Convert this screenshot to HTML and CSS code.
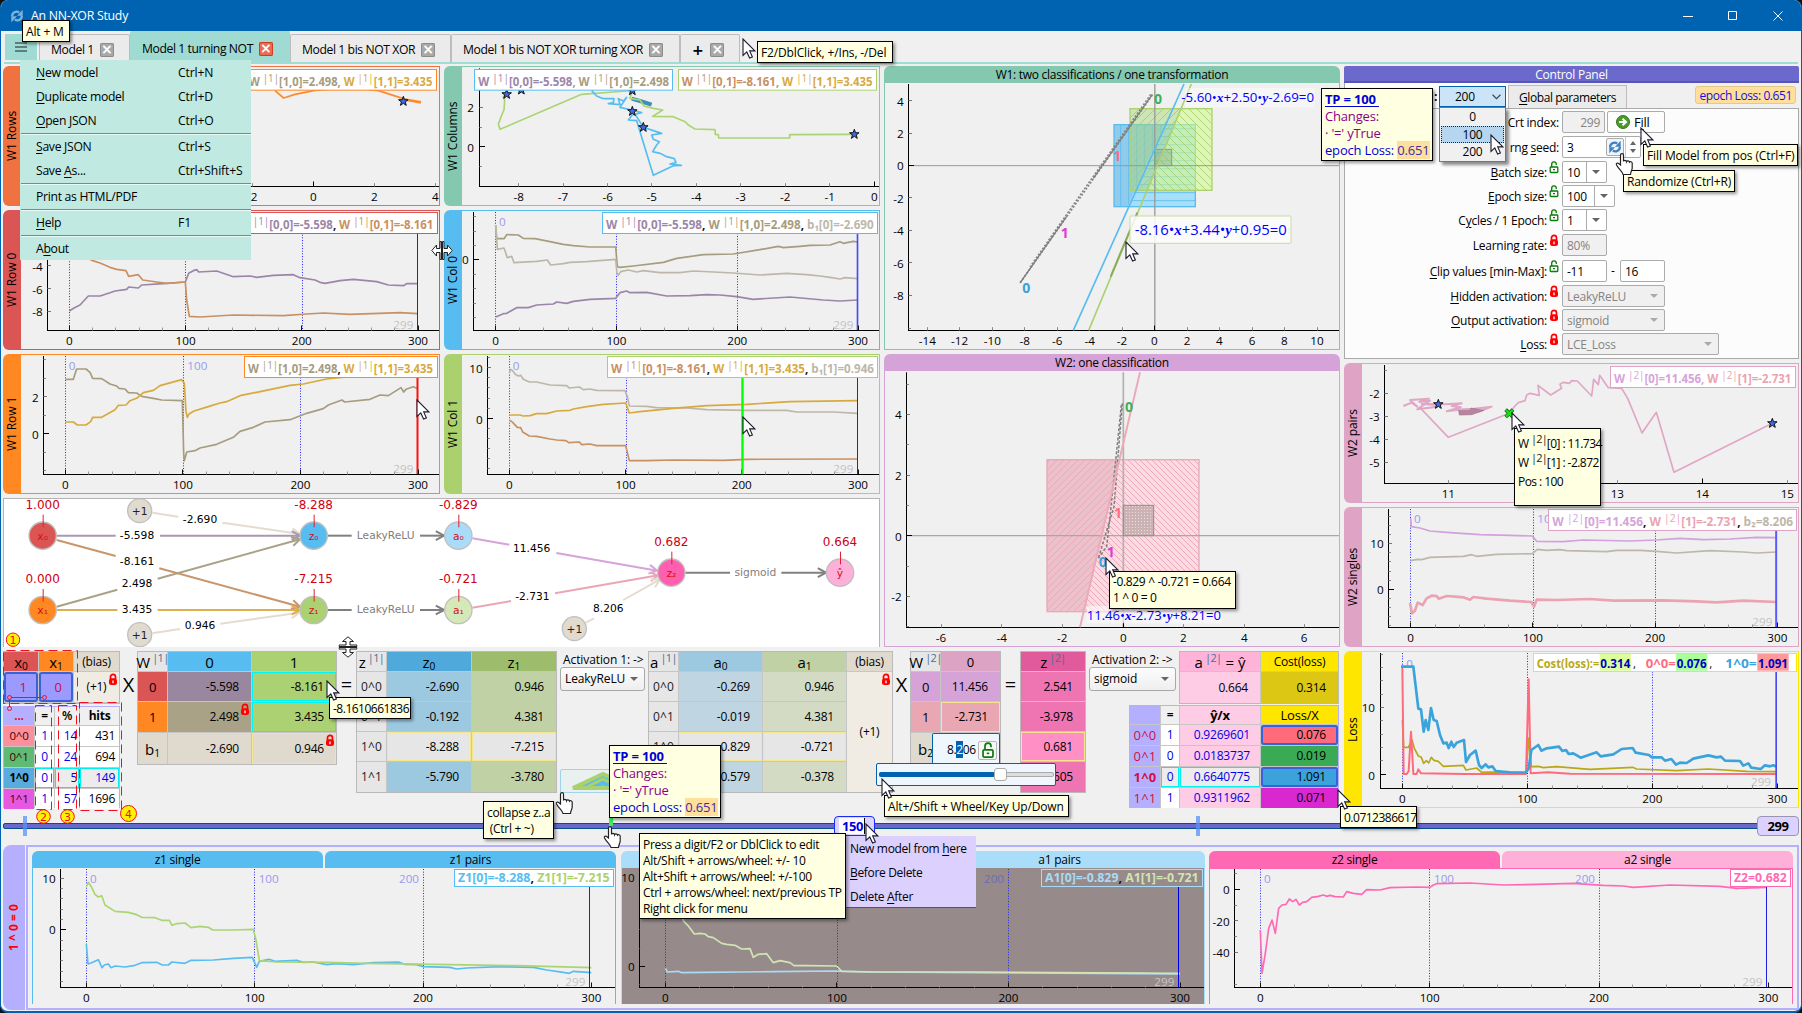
FILE: index.html
```html
<!DOCTYPE html>
<html lang="en">
<head>
<meta charset="utf-8">
<title>An NN-XOR Study</title>
<link rel="stylesheet" href="styles.css">
</head>
<body>
<svg class="defs" width="0" height="0">
  <symbol id="arrow" viewBox="0 0 14 22"><path d="M1 1v16.5l3.8-3.6 2.8 6.2 2.8-1.2-2.7-6h5.2z" fill="#fff" stroke="#1a1a2e" stroke-width="1.1"/></symbol>
  <symbol id="hand" viewBox="0 0 20 24"><path d="M5.5 13V3.2C5.5 1 8.5 1 8.5 3.2V9.5c.3-1.600 2.700-1.500 3 .2.500-1.300 2.600-1.100 3 .500.800-1 2.500-.500 2.700 1V16c0 2-1.500 3-1.700 6.500H8C7.500 19.500 4 17.500 1.500 13c-.7-1.500 1-2.500 2.200-1.500z" fill="#fff" stroke="#222" stroke-width="1.200"/></symbol>
  <symbol id="split" viewBox="0 0 22 19"><path d="M9 .5v7H5.500V4L.8 9.500l4.700 5.500v-3.500H9v7h1.500V.5zM13 .5v7h3.500V4l4.700 5.500-4.700 5.500v-3.500H13v7h-1.500V.5z" fill="#fff" stroke="#222"/></symbol>
  <symbol id="locked" viewBox="0 0 10 13"><path d="M2.500 6V3.800a2.500 2.500 0 0 1 5 0V6" fill="none" stroke="red" stroke-width="1.700"/><rect x="1" y="5.300" width="8" height="6.700" rx="2.500" fill="red"/><path d="M5 7.500v2.700" stroke="#fff" stroke-width="1.300"/></symbol>
  <symbol id="open" viewBox="0 0 10 13"><path d="M2.700 6V3.200a2.300 2.300 0 0 1 4.600 0V4" fill="none" stroke="#0a7a0a" stroke-width="1.300"/><rect x="1.200" y="6" width="7.600" height="5.500" rx=".8" fill="#fff" stroke="#0a7a0a" stroke-width="1.300"/><path d="M4 8.700h2" stroke="#0a7a0a" stroke-width="1.300"/></symbol>
  <symbol id="refresh" viewBox="0 0 16 16"><path d="M2.500 8.500C2 4.500 7 1.500 10.500 4" fill="none" stroke="currentColor" stroke-width="2.600"/><path d="M14.500.8v7H8z" fill="currentColor"/><path d="M13.500 7.500c.5 4-4.500 7-8 4.500" fill="none" stroke="currentColor" stroke-width="2.600"/><path d="M1.500 15.200v-7H8z" fill="currentColor"/></symbol>
</svg>
<div class="window">
  <header class="titlebar">
    <svg class="app-icon"><use href="#refresh"/></svg>
    <span class="app-title">An NN-XOR Study</span>
    <svg class="win-buttons" viewBox="0 0 110 16"><path d="M5 8.500h10M50.500 3.500h8v8h-8zM95.500 3.500l9 9M104.500 3.500l-9 9" fill="none" stroke="#fff"/></svg>
  </header>
  <nav class="tabs">
    <span class="burger"><i></i><i></i><i></i></span>
    <span class="tab t1">Model 1<b class="x">×</b></span>
    <span class="tab t2 active">Model 1 turning NOT<b class="x hot">×</b></span>
    <span class="tab t3">Model 1 bis NOT XOR<b class="x">×</b></span>
    <span class="tab t4">Model 1 bis NOT XOR turning XOR<b class="x">×</b></span>
    <span class="tab t5"><b class="plus">+</b><b class="x">×</b></span>
  </nav>
  <main class="main">
    <section class="left">
      <div class="panel orange-red"><h2>W1 Rows</h2><svg id="w1-rows"></svg></div>
      <div class="panel teal"><h2>W1 Columns</h2><svg id="w1-cols"></svg></div>
      <div class="panel red"><h2>W1 Row 0</h2><svg id="w1-row0"></svg></div>
      <div class="panel blue"><h2>W1 Col 0</h2><svg id="w1-col0"></svg></div>
      <div class="panel orange"><h2>W1 Row 1</h2><svg id="w1-row1"></svg></div>
      <div class="panel green"><h2>W1 Col 1</h2><svg id="w1-col1"></svg></div>
      <div class="network"><svg id="network"></svg></div>
    </section>
    <section class="middle">
      <div class="panel top teal tall1"><h2>W1: two classifications / one transformation</h2><svg id="w1-plane"></svg></div>
      <div class="panel top orchid tall2"><h2>W2: one classification</h2><svg id="w2-plane"></svg></div>
    </section>
    <section class="right">
      <div class="control">
        <h2>Control Panel</h2>
        <div class="ctabs"><span class="tp-tab">:</span><span class="gp-tab"><u>G</u>lobal parameters</span><span class="badge">epoch Loss: 0.651</span></div>
        <div class="form">
          <label class="wide">Crt index:</label><span class="row"><span class="in off r w43">299</span><span class="btn"><svg class="go" viewBox="0 0 14 14"><circle cx="7" cy="7" r="6.500" fill="#4a9a2c" stroke="#2f7a1c"/><path d="M3 7h6M6.500 3.800L10 7l-3.500 3.200" fill="none" stroke="#fff" stroke-width="2"/></svg><span>F<u>i</u>ll</span></span></span>
          <label class="wide">rng <u>s</u>eed:</label><span class="row"><span class="in seed">3<svg class="dice"><use href="#refresh"/></svg><span class="spin"><i class="up"></i><i class="dn"></i></span></span></span>
          <label><u>B</u>atch size:</label><svg class="lock"><use href="#open"/></svg><span class="in combo w45">10<i class="dd"></i></span>
          <label><u>E</u>poch size:</label><svg class="lock"><use href="#open"/></svg><span class="in combo w53">100<i class="dd"></i></span>
          <label>C<u>y</u>cles / 1 Epoch:</label><svg class="lock"><use href="#open"/></svg><span class="in combo w45">1<i class="dd"></i></span>
          <label>Learning <u>r</u>ate:</label><svg class="lock"><use href="#locked"/></svg><span class="in off w45">80%</span>
          <label><u>C</u>lip values [min-Max]:</label><svg class="lock"><use href="#open"/></svg><span class="row clip"><span class="in w45">-11</span><span>-</span><span class="in w45">16</span></span>
          <label><u>H</u>idden activation:</label><svg class="lock"><use href="#locked"/></svg><span class="in off sel w103">LeakyReLU<i class="dd"></i></span>
          <label><u>O</u>utput activation:</label><svg class="lock"><use href="#locked"/></svg><span class="in off sel w103">sigmoid<i class="dd"></i></span>
          <label><u>L</u>oss:</label><svg class="lock"><use href="#locked"/></svg><span class="in off sel w157">LCE_Loss<i class="dd"></i></span>
        </div>
      </div>
      <div class="panel pink"><h2>W2 pairs</h2><svg id="w2-pairs"></svg></div>
      <div class="panel pink"><h2>W2 singles</h2><svg id="w2-singles"></svg></div>
    </section>
  </main>
  <section class="calc">
    <div class="stack inputs">
      <div class="tbl tx">
        <b class="h c-red">x<sub>0</sub></b><b class="h c-orange">x<sub>1</sub></b><b class="h c-bias sm">(bias)</b>
        <span class="sel">1</span><span class="sel">0</span><span class="c-bias2">(+1)<svg class="lock"><use href="#locked"/></svg></span>
      </div>
      <div class="tbl hits">
        <span class="lav redt">...</span><span class="hd">=</span><span class="hd">%</span><span class="hd bold">hits</span>
        <span class="k c00">0^0</span><span class="n">1</span><span class="n r">14</span><span class="v">431</span>
        <span class="k c01">0^1</span><span class="n">0</span><span class="n r">24</span><span class="v">694</span>
        <span class="k c10">1^0</span><span class="n cy">0</span><span class="n r cy g">5</span><span class="v cy g bl">149</span>
        <span class="k c11">1^1</span><span class="n">1</span><span class="n r">57</span><span class="v">1696</span>
      </div>
    </div>
    <div class="op op1">X</div>
    <div class="tbl w1t">
      <b class="h c-gray">W<sup>|1|</sup></b><b class="h c-blue">0</b><b class="h c-green">1</b>
      <span class="c-red mid">0</span><span class="c-mauve num">-5.598</span><span class="c-green num cyb">-8.161</span>
      <span class="c-orange mid">1</span><span class="c-khaki num">2.498<svg class="lock"><use href="#locked"/></svg></span><span class="c-green num cyb">3.435</span>
      <span class="c-bias mid bvec">b<sub>1</sub></span><span class="c-bias num">-2.690</span><span class="c-bias num yb">0.946<svg class="lock"><use href="#locked"/></svg></span>
    </div>
    <div class="op op2">=</div>
    <div class="tbl z1t">
      <b class="h c-gray">z<sup>|1|</sup></b><b class="h c-blue2">z<sub>0</sub></b><b class="h c-green2">z<sub>1</sub></b>
      <span class="c-gray key">0^0</span><span class="c-b3 num">-2.690</span><span class="c-g3 num">0.946</span>
      <span class="c-gray key">0^1</span><span class="c-b3 num">-0.192</span><span class="c-g3 num">4.381</span>
      <span class="c-gray key">1^0</span><span class="c-gray num yb">-8.288</span><span class="c-gray num yb">-7.215</span>
      <span class="c-gray key">1^1</span><span class="c-b3 num">-5.790</span><span class="c-g3 num">-3.780</span>
    </div>
    <div class="act act1"><span class="cap">Activation 1: -&gt;</span><span class="drop">LeakyReLU<i class="dd"></i></span>
      <span class="fold"><svg viewBox="0 0 82 22"><path d="M12 18L42 4l30 14z" fill="#57bdf0" stroke="#abd16f" stroke-width="4"/><path d="M24 18l18-9 18 9" fill="none" stroke="#abd16f" stroke-width="3"/><path d="M37 18l5-3 5 3z" fill="#abd16f"/></svg></span></div>
    <div class="tbl a1t">
      <b class="h c-gray">a<sup>|1|</sup></b><b class="h c-b3">a<sub>0</sub></b><b class="h c-g3">a<sub>1</sub></b><b class="h c-bias sm">(bias)</b>
      <span class="c-gray key">0^0</span><span class="c-b4 num">-0.269</span><span class="c-g4 num">0.946</span><span class="c-bias2 plus1">(+1)<svg class="lock"><use href="#locked"/></svg></span>
      <span class="c-gray key">0^1</span><span class="c-b4 num">-0.019</span><span class="c-g4 num">4.381</span>
      <span class="c-gray key">1^0</span><span class="c-gray num yb">-0.829</span><span class="c-gray num yb">-0.721</span>
      <span class="c-gray key">1^1</span><span class="c-b4 num">-0.579</span><span class="c-g4 num">-0.378</span>
    </div>
    <div class="op op3">X</div>
    <div class="tbl w2t">
      <b class="h c-gray">W<sup>|2|</sup></b><b class="h c-pk mid">0</b>
      <span class="c-or mid sm">0</span><span class="c-or num">11.456</span>
      <span class="c-rose mid sm">1</span><span class="c-rose num yb">-2.731</span>
      <span class="c-bias mid bvec">b<sub>2</sub></span><span class="c-bias num"></span>
    </div>
    <div class="op op4">=</div>
    <div class="tbl z2t">
      <b class="h c-hp">z<sup>|2|</sup></b>
      <span class="c-hp2 num">2.541</span><span class="c-hp2 num">-3.978</span><span class="c-hp3 num yb">0.681</span><span class="c-hp2 num">2.605</span>
    </div>
    <div class="act act2"><span class="cap">Activation 2: -&gt;</span><span class="drop">sigmoid<i class="dd"></i></span></div>
    <div class="stack outputs">
      <div class="tbl cost"><b class="h c-lp">a<sup>|2|</sup>&nbsp;= ŷ</b><b class="h c-yel sm">Cost(loss)</b><span class="c-vlp num">0.664</span><span class="c-oli num">0.314</span></div>
      <div class="tbl losses">
        <span class="lav"></span><span class="hd">=</span><span class="c-vlp mid sm bold">ŷ/x</span><span class="c-yel mid sm">Loss/X</span>
        <span class="lav lk">0^0</span><span class="n">1</span><span class="c-vlp num bl">0.9269601</span><span class="d00 num ryb">0.076</span>
        <span class="lav lk">0^1</span><span class="n">0</span><span class="c-vlp num bl">0.0183737</span><span class="d01 num">0.019</span>
        <span class="lav lk bold">1^0</span><span class="n cy g">0</span><span class="cy g num bl">0.6640775</span><span class="d10 num ryb">1.091</span>
        <span class="lav lk">1^1</span><span class="n">1</span><span class="c-vlp num bl">0.9311962</span><span class="d11 num">0.071</span>
      </div>
    </div>
    <div class="panel yellow"><h2>Loss</h2><svg id="loss"></svg></div>
  </section>
  <div class="timeline"><span class="groove"></span><i class="mark m0"></i><i class="mark m200"></i><i class="mark mg"></i><span class="knob k150"><em>150</em></span><span class="knob k299">299</span></div>
  <section class="bottom">
    <h2 class="case">1 ^ 0 = 0</h2>
    <div class="trio">
      <div class="duo z1"><span class="dt a">z1 single</span><span class="dt b">z1 pairs</span><svg id="z1"></svg></div>
      <div class="duo a1"><span class="dt a">a1 single</span><span class="dt b">a1 pairs</span><svg id="a1"></svg></div>
      <div class="duo z2"><span class="dt a">z2 single</span><span class="dt b">a2 single</span><svg id="z2"></svg></div>
    </div>
  </section>
</div>

<svg class="callouts" viewBox="0 625 145 205">
  <g fill="none" stroke="#f01020" stroke-dasharray="9 5"><path d="M3.500 703.500V650.500H77.500V703.500zM35.500 705.500h16v104h-16zM58.500 705.500h18v104h-18zM79.500 702.500h42v108h-42z"/></g>
  <g fill="none" stroke="#f01020"><path d="M11 697.500h31M9.500 699v8"/><circle cx="9.500" cy="697.500" r="2"/><circle cx="44.500" cy="697.500" r="2"/><circle cx="9.500" cy="708.500" r="2"/></g>
  <g fill="#fff200" stroke="#f01020"><circle cx="13" cy="639.700" r="6.700"/><circle cx="43.500" cy="816.500" r="6.800"/><circle cx="67.500" cy="816.500" r="6.800"/><circle cx="128.500" cy="813.500" r="8"/></g>
  <g class="cnum"><text x="13" y="644">1</text><text x="43.500" y="821">2</text><text x="67.500" y="821">3</text><text x="128.500" y="818">4</text></g>
</svg>

<div class="menu">
  <p><span><u>N</u>ew model</span><kbd>Ctrl+N</kbd></p><p><span><u>D</u>uplicate model</span><kbd>Ctrl+D</kbd></p><p><span><u>O</u>pen JSON</span><kbd>Ctrl+O</kbd></p><hr>
  <p><span><u>S</u>ave JSON</span><kbd>Ctrl+S</kbd></p><p><span>Save <u>A</u>s...</span><kbd>Ctrl+Shift+S</kbd></p><hr>
  <p><span>Print as HTML/PDF</span></p><hr>
  <p><span><u>H</u>elp</span><kbd>F1</kbd></p><hr>
  <p><span>A<u>b</u>out</span></p>
</div>
<div class="context"><p>New model from <u>h</u>ere</p><p><u>B</u>efore Delete</p><p>Delete <u>A</u>fter</p></div>
<div class="tp-combo"><span>200</span><svg viewBox="0 0 8 5"><path d="M.5.5L4 4 7.500.5" fill="none" stroke="#345"/></svg></div>
<div class="tp-list"><span>0</span><span class="on">100</span><span>200</span></div>
<div class="editor"><span>8.<mark>2</mark>06</span><b><svg><use href="#open"/></svg></b></div>
<div class="slide-pop"><i class="track"></i><i class="fill"></i><i class="grip"></i></div>

<div class="tip alt-m">Alt + M</div>
<div class="tip f2">F2/DblClick, +/Ins, -/Del</div>
<div class="tip tp tp-a"><b><u>TP = 100&nbsp;</u></b><p>Changes:</p><p>· '=' yTrue</p><p class="bl">epoch Loss: <mark>0.651</mark></p></div>
<div class="tip fillm">Fill Model from pos (Ctrl+F)</div>
<div class="tip rand">Randomize (Ctrl+R)</div>
<div class="tip val1">-8.1610661836</div>
<div class="tip val2">-0.829 ^ -0.721 = 0.664<br>1 ^ 0 = 0</div>
<div class="tip pos">W <sup>|2|</sup>[0] : 11.734<br>W <sup>|2|</sup>[1] : -2.872<br>Pos : 100</div>
<div class="tip coll">collapse z..a<br>&nbsp;(Ctrl + ~)</div>
<div class="tip tp tp-b"><b><u>TP = 100&nbsp;</u></b><p>Changes:</p><p>· '=' yTrue</p><p class="bl">epoch Loss: <mark>0.651</mark></p></div>
<div class="tip press">Press a digit/F2 or DblClick to edit<br>Alt/Shift + arrows/wheel: +/- 10<br>Alt+Shift + arrows/wheel: +/-100<br>Ctrl + arrows/wheel: next/previous TP<br>Right click for menu</div>
<div class="tip wheel">Alt+/Shift + Wheel/Key Up/Down</div>
<div class="tip val3">0.0712386617</div>

<svg class="pointers" viewBox="0 0 1802 1013" id="pointers"></svg>
<script src="charts.js"></script>
</body>
</html>
```
FILE: styles.css
```css
* { box-sizing: border-box; }
html, body { margin: 0; height: 100%; background: #111; overflow: hidden; }
body { font: 12px/16px "Open Sans", "Noto Sans", sans-serif; color: #000; letter-spacing: -.25px; position: relative; }
h2, p { margin: 0; font-weight: 400; font-size: inherit; }
.defs { position: absolute; }
u { text-underline-offset: 2px; }
sub { font-size: .68em; line-height: 0; vertical-align: -.25em; }
sup { font-size: .8em; line-height: 0; vertical-align: .45em; color: #4b6f90; letter-spacing: -.6px; }
.window { width: 1802px; height: 1013px; background: #f0f0f0; border: 1px solid #0063b1; border-top: 0; border-bottom: 2px solid #0063b1; border-radius: 8px; overflow: hidden; display: flex; flex-direction: column; padding-left: 2px; }

.titlebar { height: 31px; flex: none; margin: 0 -1px 0 -3px; background: #0063b1; color: #fff; display: flex; align-items: center; padding: 0 14px 0 10px; }
.app-icon { width: 14px; height: 14px; color: #7db4dc; margin-right: 7px; }
.app-title { flex: 1; font-size: 12.300px; }
.win-buttons { width: 110px; height: 16px; }

.tabs { height: 33px; flex: none; display: flex; align-items: flex-end; border-bottom: 2px solid #9fdcd2; margin: 0 3px 0 1px; }
.burger { width: 32px; height: 26px; margin: 0 2px 2px 1px; background: #9fdad3; display: flex; flex-direction: column; align-items: center; justify-content: center; gap: 2px; }
.burger i { width: 12px; height: 2px; background: #5d7f7b; }
.tab { height: 28px; display: flex; align-items: center; gap: 6px; padding: 3px 0 0 11px; background: #ebebeb; border: 1px solid #bdbdbd; border-bottom: 0; border-radius: 2px 2px 0 0; font-size: 12.200px; letter-spacing: -.42px; }
.t1 { width: 91px; } .t2 { width: 160px; } .t3 { width: 161px; } .t4 { width: 229px; } .t5 { width: 60px; }
.tab.active { height: 31px; background: #9fdad3; border-color: #9fdad3; }
.x { width: 14px; height: 14px; border-radius: 2px; background: #a9a9a9; box-shadow: inset 0 0 0 1px #8c8c8c; color: #fff; font: bold 14px/13px "DejaVu Sans", sans-serif; text-align: center; letter-spacing: 0; }
.x.hot { background: #ee6a4c; box-shadow: inset 0 0 0 1px #d23c22; }
.plus { font: bold 14px "DejaVu Sans", sans-serif; margin-right: 1px; }

.main { display: flex; gap: 4px; height: 581px; margin-top: 2px; flex: none; }
.left { width: 877px; display: grid; grid-template-columns: 437px 436px; grid-template-rows: 140px 140px 140px 149px; gap: 4px; }
.middle { width: 456px; display: flex; flex-direction: column; gap: 4px; }
.right { width: 455px; display: flex; flex-direction: column; gap: 4px; }
.panel { display: flex; --c: #999; height: 140px; }
.panel h2 { flex: 0 0 17px; background: var(--c); writing-mode: vertical-rl; transform: rotate(180deg); text-align: center; border-radius: 0 6px 6px 0; line-height: 17px; letter-spacing: -.1px; }
.panel svg { flex: 1; min-width: 0; height: 100%; border: 1px solid var(--c); display: block; }
.panel.top { flex-direction: column; }
.panel.top h2 { writing-mode: horizontal-tb; transform: none; border-radius: 6px 6px 0 0; letter-spacing: -.28px; }
.panel.top svg { height: auto; min-height: 0; border-top: 0; }
.tall1 { height: 284px; } .tall2 { height: 293px; }
.orange-red { --c: #f07241; } .teal { --c: #84c8b0; } .red { --c: #dc5555; } .blue { --c: #57bdf0; }
.orange { --c: #ff8822; } .green { --c: #abd16f; } .orchid { --c: #d6a3d8; } .pink { --c: #dfa4c5; } .yellow { --c: #ffe600; }
.network { grid-column: 1 / 3; background: #fff; border: 1px solid #b4b4b4; border-bottom: 0; }
.network svg { width: 875px; height: 148px; display: block; }
svg text { font-family: "Open Sans", sans-serif; letter-spacing: 0; }

.control { height: 293px; }
.control h2 { height: 17px; background: #6b69cc; border-bottom: 2px solid #5856b4; border-radius: 2px 2px 0 0; color: #fff; text-align: center; line-height: 17px; }
.ctabs { height: 25px; display: flex; align-items: flex-end; position: relative; }
.tp-tab { width: 164px; height: 25px; background: #fff; padding: 6px 0 0 89px; border-left: 1px solid #aaa; font-weight: bold; }
.gp-tab { width: 119px; height: 23px; line-height: 24px; padding-left: 10px; background: #ebebeb; border: 1px solid #bdbdbd; border-bottom: 0; letter-spacing: -.42px; }
.badge { margin: 0 3px 4px auto; background: #ffdf9b; color: #1010e0; border: 1px solid #e4c98e; border-radius: 3px; padding: 0 3px; height: 18px; line-height: 17px; letter-spacing: -.4px; }
.form { height: 251px; background: #fcfcfc; border: 1px solid #aaa; display: grid; grid-template-columns: 202px 13px 1fr; grid-template-rows: 25px 25px 24px 24px 25px 26px 25px 24px 24px 24px; column-gap: 1px; padding-top: 2px; align-items: start; }
.form label { text-align: right; line-height: 23px; letter-spacing: -.25px; }
.form label.wide { grid-column: 1 / 3; padding-right: 2px; }
.lock { width: 10px; height: 13px; }
.form .lock { margin: 0 0 0 1px; }
.row { display: flex; gap: 2px; align-items: center; }
.clip { gap: 4px; } .clip > span:nth-child(2) { width: 5px; }
.in, .btn { height: 22px; border: 1px solid #ababab; border-radius: 2px; background: #fff; line-height: 21px; padding: 0 4px; display: flex; align-items: center; position: relative; }
.off { background: #f0f0f0; color: #848484; } .r { justify-content: flex-end; }
.w43 { width: 43px; } .w45 { width: 45px; } .w53 { width: 53px; } .w103 { width: 103px; } .w157 { width: 157px; }
.btn { width: 58px; gap: 4px; padding-left: 8px; background: #fdfdfd; font-size: 13px; } .go { width: 14px; height: 14px; }
.seed { width: 79px; } .dice { width: 18px; height: 18px; margin-left: 32px; padding: 1px; color: #3f82bf; border: 1px solid #aaa; border-radius: 2px; background: #eef4fa; }
.spin { position: absolute; right: 0; top: 0; width: 15px; height: 20px; border-left: 1px solid #ccc; display: flex; flex-direction: column; gap: 4px; align-items: center; justify-content: center; }
.up, .dn { border: 3.500px solid transparent; } .up { border-bottom: 4px solid #666; border-top: 0; } .dn, .dd { border-top: 4px solid #666; border-bottom: 0; }
.dd { margin-left: auto; border-left: 4px solid transparent; border-right: 4px solid transparent; margin-right: 6px; }
.combo::after { content: ""; position: absolute; right: 19px; top: 0; bottom: 0; width: 1px; background: #ababab; }
.combo .dd { margin-right: 2px; } .off .dd { border-top-color: #aaa; margin-right: 2px; }

.calc { height: 157px; margin-top: 4px; display: flex; align-items: flex-start; flex: none; position: relative; }
.calc > * { flex: none; }
.tbl { display: grid; gap: 1px; background: #c6c6c6; border: 1px solid #bababa; }
.tbl > * { display: flex; align-items: center; justify-content: center; position: relative; min-width: 0; }
.tbl sub { position: relative; top: 4px; } .tbl sup { position: relative; top: -4px; margin-left: 2px; font-size: 11px; }
.h { font-weight: 400; font-size: 15px; letter-spacing: 0; } .h.sm, .sm { font-size: 12px; letter-spacing: -.2px; }
.mid { font-size: 13px; } .bvec { font-size: 15px; letter-spacing: 0; } .key { letter-spacing: .1px; color: #222; font-size: 12px; }
.tbl .num { justify-content: flex-end; padding-right: 12px; font-size: 12px; letter-spacing: -.2px; }
.tbl .lock { position: absolute; top: 1px; right: 1px; }
.bold { font-weight: 700; } .bl { color: #0000e6; } .redt { color: #e01020; font-weight: bold; }
.inputs { width: 117px; display: flex; flex-direction: column; gap: 2px; }
.tx { grid-template-columns: 34px 34px 1fr; grid-template-rows: 19px 30px; height: 53px; }
.tx .sel { background: #9c99ff; border: 2px solid #3a62d8; border-radius: 3px; color: #d01030; font-size: 13px; padding-left: 4px; }
.hits { grid-template-columns: 30px 19px 24px 1fr; grid-template-rows: 18px repeat(4, 20px); height: 102px; border-color: #b4b0ff; }
.hits > span { background: #fff; }
.hits .lav, .lav { background: #b4b0ff; } .hits .hd, .hd { background: #f0f0f0; font-weight: 600; }
.hits .hd.bold { font-weight: 700; }
.n { color: #0000e6; background: #fff; } .tbl .n.r, .tbl .v { justify-content: flex-end; padding-right: 4px; }
.tbl .n.r { padding-right: 2px; } .v.bl { color: #0000e6; }
.hits .g, .g { background: #ececec; } .cy { box-shadow: inset 0 0 0 1px #00f0f0; }
.hits .k { font-size: 11.500px; color: #400; } .hits .c00 { background: #fb8f9c; } .hits .c01 { background: #5fbb74; } .hits .c10 { background: #57abdf; font-weight: bold; color: #000; } .hits .c11 { background: #e758e0; }
.op { font-size: 20px; letter-spacing: 0; text-align: center; line-height: 20px; padding-top: 24px; }
.op1 { width: 17px; } .op2 { width: 19px; } .op3 { width: 17px; } .op4 { width: 19px; }
.w1t { width: 200px; height: 114px; grid-template-columns: 29px 83px 1fr; grid-template-rows: 19px 29px 30px 31px; }
.z1t { width: 201px; height: 142px; grid-template-columns: 29px 84px 1fr; grid-template-rows: 19px 29px 29px 29px 1fr; }
.act { position: relative; width: 91px; padding: 2px 0 0 3px; height: 142px; display: flex; flex-direction: column; }
.cap { line-height: 14px; padding-left: 3px; letter-spacing: -.1px; white-space: nowrap; }
.drop { height: 24px; width: 85px; border: 1px solid #a8a8a8; border-radius: 3px; background: linear-gradient(#fdfdfd, #eee); display: flex; align-items: center; padding: 0 0 0 4px; font-size: 12px; letter-spacing: -.1px; }
.fold { margin-top: auto; width: 85px; height: 24px; border: 1px solid #9fd4ea; border-radius: 2px; background: #e8f0f0; }
.fold svg { display: block; height: 22px; width: 82px; }
.a1t { width: 245px; height: 142px; grid-template-columns: 29px 83px 83px 1fr; grid-template-rows: 19px 29px 29px 29px 1fr; }
.plus1 { grid-column: 4; grid-row: 2 / 6; }
.w2t { width: 91px; height: 114px; grid-template-columns: 29px 1fr; grid-template-rows: 19px 29px 30px 31px; }
.z2t { width: 66px; height: 142px; grid-template-rows: 19px 29px 29px 29px 1fr; }
.act2 { width: 43px; } .act2 .drop { width: 87px; }
.outputs { width: 210px; display: flex; flex-direction: column; gap: 1px; align-items: flex-end; }
.cost { width: 160px; height: 53px; grid-template-columns: 80px 1fr; grid-template-rows: 19px 1fr; }
.losses { width: 210px; height: 103px; grid-template-columns: 30px 18px 80px 1fr; grid-template-rows: 18px repeat(4, 20px); border-color: #b4b0ff; }
.losses .c-vlp.num, .losses .cy.num { padding-right: 10px; }
.lk { color: #d01040; font-size: 13px; letter-spacing: .2px; }
.c-red { background: #dc5555; } .c-orange { background: #ff8822; } .c-bias { background: #e0dace; } .c-bias2 { background: #f0ece3; }
.c-gray { background: #e6e6e6; } .c-blue { background: #57bdf0; } .c-green { background: #abd173; } .c-mauve { background: #9987a0; } .c-khaki { background: #aaa287; }
.c-blue2 { background: #4fa9da; } .c-green2 { background: #9dbd6c; } .c-b3 { background: #9cc8e0; } .c-g3 { background: #c0d1a6; } .c-b4 { background: #bfd6e2; } .c-g4 { background: #d3dbc5; }
.c-pk { background: #dda3c4; } .c-or { background: #d5a3d8; } .c-rose { background: #e9a7b4; } .c-hp { background: #e05a9c; } .c-hp2 { background: #ef74b2; } .c-hp3 { background: #ff8fc4; }
.c-lp { background: #ffb3d9; } .c-vlp { background: #ffcce6; } .c-yel { background: #ffe600; } .c-oli { background: #dcc814; }
.d00 { background: #ff6b7b; } .d01 { background: #3aab54; } .d10 { background: #3ba2dc; } .d11 { background: #d928cf; } .ryb { box-shadow: inset 0 0 0 2px #3a62d8; border-radius: 3px; }
.cyb { box-shadow: inset 0 0 0 1px #00f6f6; } .yb { box-shadow: inset 0 0 0 1px #f5e68c; }
.calc .panel { height: 157px; width: 455px; margin-left: 5px; }

.timeline { position: relative; height: 20px; margin: 8px 2px 0 0; flex: none; width: 1796px; }
.groove { display: block; height: 6px; margin-top: 7px; background: #6a68cc; border: 1px solid #0a4d8c; border-radius: 2px; }
.mark { position: absolute; top: 0; width: 4px; height: 20px; background: rgba(90, 145, 250, .75); }
.m0 { left: 20px; } .m200 { left: 1193px; } .mg { left: 606px; background: #3cf05a; height: 10px; }
.knob { position: absolute; top: 0; height: 20px; border: 1px solid #9a95b5; border-radius: 4px; background: #dcd2ff; font: bold 13px/18px "Open Sans", sans-serif; text-align: center; letter-spacing: -.4px; }
.k299 { left: 1754px; width: 42px; } .k150 { left: 831px; width: 41px; border-color: #1a2cf0; color: #0000e0; text-align: left; padding-left: 4px; }
.k150 em { font-style: normal; display: inline-block; background: #fff; padding: 0 1px 0 3px; border-right: 1px solid #000; height: 16px; line-height: 17px; }

.bottom { display: flex; height: 165px; margin-top: 9px; gap: 1px; flex: none; width: 1796px; }
.case { width: 22px; background: #b4b0ff; border-radius: 0 8px 8px 0; writing-mode: vertical-rl; transform: rotate(180deg); text-align: center; line-height: 22px; font-weight: 700; color: #f00; font-size: 12px; letter-spacing: 0; }
.bottom .case { font-weight: 700; }
.trio { flex: 1; border: 2px solid #b4b0ff; display: flex; gap: 4px; padding: 4px 4px 4px 4px; }
.duo { width: 584px; flex: none; display: grid; grid-template-columns: 291px 291px; grid-template-rows: 17px 1fr; column-gap: 2px; }
.duo svg { grid-column: 1 / 3; width: 584px; height: 136px; display: block; }
.dt { text-align: center; border-radius: 6px 6px 0 0; line-height: 18px; background: var(--a); letter-spacing: -.25px; }
.dt.b { background: var(--b); }
.duo.z1 { --a: #57bdf0; --b: #57bdf0; margin-right: 1px; } .duo.a1 { --a: #aaddf9; --b: #aaddf9; } .duo.z2 { --a: #ff69b4; --b: #ffb0d8; }
.duo svg { border-left: 1px solid var(--a); border-right: 1px solid var(--a); }
.duo.a1 svg { background: #968b8a; }

.callouts { position: absolute; left: 0; top: 625px; width: 145px; height: 205px; }
.cnum text { font: 11px "DejaVu Sans", sans-serif; fill: #f01020; text-anchor: middle; }
.menu { position: absolute; left: 20px; top: 60px; width: 231px; height: 200px; background: #bfe9e1; padding-top: 1px; letter-spacing: -.3px; font-size: 12.200px; }
.menu p { height: 24px; line-height: 24px; display: flex; padding-left: 16px; } .menu span { width: 142px; } kbd { font: inherit; letter-spacing: -.15px; }
.menu hr { margin: 0 0 0 1px; border: 0; height: 2px; background: linear-gradient(#6f8f8b 50%, #e8fbf7 50%); }
.context { position: absolute; left: 846px; top: 836px; width: 130px; height: 72px; background: #dcd0ff; border-bottom: 1px solid #555; letter-spacing: -.33px; } .context p { height: 24px; line-height: 26px; padding-left: 4px; }
.tp-combo { position: absolute; left: 1439px; top: 86px; width: 67px; height: 21px; background: #cce4f7; border: 1px solid #0063b1; display: flex; align-items: center; padding: 0 4px 0 15px; justify-content: space-between; } .tp-combo svg { width: 9px; height: 6px; }
.tp-list { position: absolute; left: 1439px; top: 107px; width: 67px; height: 55px; background: #f0f0f0; border: 1px solid #777; box-shadow: 3px 3px 3px rgba(0,0,0,.45); display: flex; flex-direction: column; } .tp-list span { height: 18px; text-align: center; line-height: 18px; } .tp-list .on { background: #b6d5ee; outline: 1px dotted #223; outline-offset: -1px; margin: 0 1px; line-height: 17px; }
.editor { position: absolute; left: 932px; top: 733px; width: 68px; height: 31px; background: #f0f6fd; border: 1px solid #0063b1; border-bottom: 0; border-radius: 2px 2px 0 0; display: flex; align-items: center; padding: 2px 2px 0 14px; justify-content: space-between; letter-spacing: -.35px; }
.editor mark { background: #0063b1; color: #fff; } .editor b { border: 1px solid #b5b5b5; border-radius: 2px; width: 19px; height: 19px; display: flex; justify-content: center; background: #f6f6f6; } .editor svg { width: 14px; height: 17px; }
.slide-pop { position: absolute; left: 876px; top: 763px; width: 180px; height: 23px; background: #f0f6fd; border: 1px solid #0063b1; border-radius: 2px; }
.track, .fill, .grip { position: absolute; } .track { left: 2px; right: 1px; top: 8px; height: 5px; border: 1px solid #aaa; border-radius: 2px; background: #ddd; } .fill { left: 2px; width: 116px; top: 8px; height: 5px; background: #0063b1; border-radius: 2px; } .grip { left: 117px; top: 4px; width: 13px; height: 13px; background: #fff; border: 1px solid #aaa; border-radius: 3px; }

.tip { position: absolute; background: #ffffe1; border: 1px solid #000; padding: 2px 3px; line-height: 17px; white-space: nowrap; letter-spacing: -.15px; box-shadow: 2px 2px 3px rgba(0,0,0,.4); }
.alt-m { left: 22px; top: 20px; width: 48px; height: 22px; } .f2 { left: 757px; top: 41px; width: 136px; height: 22px; }
.tip.tp { font-size: 13px; line-height: 17px; width: 112px; height: 73px; color: #8b008b; letter-spacing: -.18px; } .tip.tp b, .tip.tp .bl { color: #0000d8; } .tip.tp b { display: block; } .tp mark { background: #ffdf9b; color: #3a2fa8; }
.tp-a { left: 1321px; top: 88px; } .tp-b { left: 609px; top: 745px; }
.fillm { left: 1643px; top: 144px; width: 155px; height: 22px; letter-spacing: -.1px; } .rand { left: 1623px; top: 170px; width: 112px; height: 22px; }
.tip.val1 { left: 329px; top: 697px; width: 82px; height: 22px; letter-spacing: -.5px; } .tip.val2 { left: 1109px; top: 571px; width: 127px; height: 38px; line-height: 16px; letter-spacing: -.35px; }
.tip.pos { left: 1514px; top: 428px; width: 87px; height: 78px; line-height: 19px; padding-top: 5px; letter-spacing: -.55px; } .pos sup { font-size: 11px; letter-spacing: -.9px; color: #222; }
.coll { left: 483px; top: 801px; width: 71px; height: 38px; line-height: 16px; padding-top: 3px; }
.tip.coll { letter-spacing: -.3px; line-height: 16px; }
.tip.press { left: 639px; top: 833px; width: 207px; height: 86px; line-height: 16px; padding-top: 3px; letter-spacing: -.3px; }
.wheel { left: 884px; top: 795px; width: 185px; height: 22px; } .tip.val3 { left: 1340px; top: 806px; width: 77px; height: 22px; letter-spacing: -.5px; }
.pointers { position: absolute; left: 0; top: 0; width: 1802px; height: 1013px; pointer-events: none; }
```
FILE: charts.js
```javascript
// Plot coordinates are thirds of a pixel, so one device pixel is 3 units.
const snap = v => Math.floor(v / 3) * 3 + 1.5;
const line = (x1, y1, x2, y2, c, w = 3, more = '') => `<line x1="${x1}" y1="${y1}" x2="${x2}" y2="${y2}" stroke="${c}" stroke-width="${w}" ${more}/>`;
const text = (x, y, s, o = {}) => `<text x="${x}" y="${y}" font-size="${o.size || 35}" fill="${o.fill || '#000'}" text-anchor="${o.a || 'start'}" ${o.bold ? 'font-weight="700"' : ''} ${o.len ? `textLength="${o.len}" lengthAdjust="spacingAndGlyphs"` : ''} ${o.more || ''}>${s}</text>`;
const rect = (x, y, w, h, f, s = 'none', sw = 3, more = '') => `<rect x="${x}" y="${y}" width="${w}" height="${h}" fill="${f}" stroke="${s}" stroke-width="${sw}" ${more}/>`;
const poly = ([c, w, pts, more = '']) => `<polyline points="${pts}" fill="none" stroke="${c}" stroke-width="${w}" stroke-linejoin="round" ${more}/>`;
const star = (x, y) => {
  let p = '';
  for (let i = 0; i < 10; i++) { const r = i % 2 ? 6 : 15, a = -Math.PI / 2 + i * Math.PI / 5; p += `${x + r * Math.cos(a)},${y + r * Math.sin(a)} `; }
  return `<polygon points="${p}" fill="#4169e1" stroke="#111" stroke-width="3"/>`;
};
const K = { mauve: '#9b86a9', khaki: '#a69c7e', brown: '#c99062', gold: '#d8a93e', grey: '#bdb7aa', blue: '#57bdf0', green: '#abd473', vio: '#d6a3da', rose: '#eba3b2', pink: '#ff69b4' };
const W = (layer, rest, c) => [`W <tspan font-size="33" font-weight="400" dy="-11">|${layer}|</tspan><tspan dy="11">${rest}</tspan>`, c];
const comma = [', ', '#111'];

function legend({ box: [x1, y1, x2, y2], color, from, to, parts, bg = '#fff' }) {
  return rect(x1 + 1.5, y1 + 1.5, x2 - x1 - 3, y2 - y1 - 3, bg, color, 3) +
    text(from, y2 - 15, parts.map(([s, c]) => `<tspan fill="${c}">${s}</tspan>`).join(''), { size: 38, bold: 1, len: to - from, more: 'xml:space="preserve"' });
}

function chart(id, c) {
  const el = document.getElementById(id);
  el.setAttribute('viewBox', c.box.join(' '));
  const [ax, top, ay, right] = c.axis, yb = snap(ay), xb = snap(ax);
  let s = c.under || '';
  (c.guides || []).forEach(g => s += line(snap(g), top, snap(g), ay, '#2222ff', 3, 'stroke-dasharray="3 5"'));
  (c.notes || []).forEach(([x, y, t, a, f]) => s += text(x, y, t, { a, fill: f || '#9a9aec' }));
  s += (c.lines || []).map(poly).join('');
  if (c.end) s += line(c.end[0], c.end[1], c.end[0], ay, c.end[2] || '#2020e0', c.end[3] || 3);
  s += line(xb, top, xb, yb + 1.5, '#000') + line(xb, yb, right, yb, '#000');
  (c.ym || []).forEach(y => s += line(xb, snap(y), xb + 7.500, snap(y), '#888'));
  (c.yl || []).forEach(([y, t, m]) => {
    s += line(xb, snap(y), xb + (m ? 16.500 : 10.500), snap(y), m ? '#000' : '#777');
    s += text(ax - 15, y + 15, t, { a: 'end' });
  });
  if (c.t) {
    const [a, b] = c.t;
    for (let i = 0; i <= 15; i++) {
      const x = snap(a + (b - a) * i / 15), m = i % 5 === 0;
      s += line(x, yb, x, yb - (m ? 15 : 9), m ? '#111' : '#999');
      if (m) s += text(a + (b - a) * i / 15, ay + 43, i * 20, { a: 'middle' });
    }
  }
  (c.xl || []).forEach(([x, t, m]) => {
    s += line(snap(x), yb, snap(x), yb - (m ? 15 : 10), m ? '#000' : '#888');
    s += text(x, ay + 43, t, { a: 'middle' });
  });
  s += (c.over || '') + (c.stars || []).map(p => star(...p)).join('') + (c.legends || []).map(legend).join('');
  el.innerHTML = s;
}
const n299 = (x, y, f = '#c4c4c4') => [x, y, '299', 'end', f];

chart('w1-rows', {
  box: [63, 201, 1254, 414], axis: [-10, 205, 559, 1318],
  xl: [[757, '-2'], [940, '0', 1], [1123, '2'], [1306, '4']],
  lines: [['#ff8a2a', 5, '825,272 851,294 885,283 945,271 1050,262 1135,272 1210,296'], ['#ff8a2a', 8, '1206,297 1263,307']],
  stars: [[1210, 304]],
  legends: [{ box: [200, 207, 1311, 272], color: '#ff8822', from: 747, to: 1297, parts: [W(1, '[1,0]=2.498', K.khaki), [', ', K.khaki], W(1, '[1,1]=3.435', K.gold)] }]
});
chart('w1-row0', {
  box: [63, 633, 1254, 414], axis: [143, 640, 991, 1318], t: [208, 1254], guides: [208, 556, 907], end: [1252.5, 700],
  yl: [[797, '-4'], [866, '-6'], [934, '-8']], notes: [n299(1240, 987)],
  lines: [[K.mauve, 5, '208,933 222,924 240,915 265,888 300,888 330,878 345,873 380,868 386,861 415,864 425,855 490,851 556,846 566,820 580,812 590,809 596,816 650,813 700,830 750,828 770,832 820,826 880,824 900,833 945,840 960,847 975,850 1020,842 1060,838 1130,845 1165,855 1210,857 1220,851 1253,851'],
    [K.brown, 5, '200,740 278,782 300,789 330,802 350,808 378,812 386,829 415,824 428,840 470,846 500,850 556,846 560,900 568,949 600,951 700,945 850,947 920,942 970,939 1050,943 1200,938 1253,941']],
  legends: [{ box: [560, 636, 1314, 702], color: '#dc5555', from: 716, to: 1300, parts: [W(1, '[0,0]=-5.598', K.mauve), comma, W(1, '[0,1]=-8.161', K.brown)] }]
});
chart('w1-row1', {
  box: [63, 45, 1254, 414], axis: [131, 48, 404, 1318], t: [196, 1254], guides: [196, 550, 902], end: [1252.5, 114, '#ff1010', 6],
  yl: [[170, '2'], [281, '0', 1]], ym: [58, 114, 225, 337, 392], notes: [[206, 90, '0'], [562, 90, '100'], n299(1240, 399)],
  lines: [[K.khaki, 5, '196,118 220,118 230,87 258,87 270,97 278,115 305,116 330,132 350,138 357,145 375,147 385,158 410,159 425,169 460,175 485,180 547,182 551,340 553,362 560,336 585,332 600,324 650,313 700,292 720,274 760,262 795,246 870,239 920,220 970,206 985,195 1026,180 1034,186 1110,178 1140,165 1165,167 1203,143 1211,156 1218,148 1240,140 1253,146'],
    [K.gold, 5, '196,246 220,246 232,255 258,255 272,245 278,232 305,232 345,209 355,196 378,195 390,182 410,175 430,158 460,151 480,137 545,119 553,130 558,215 562,232 567,222 582,213 625,200 660,189 680,185 720,167 770,157 870,136 910,132 980,117 1040,111']],
  legends: [{ box: [732, 48, 1314, 114], color: '#ff8822', from: 744, to: 1299, parts: [W(1, '[1,0]=2.498', K.khaki), comma, W(1, '[1,1]=3.435', K.gold)] }]
});
chart('w1-cols', {
  box: [66, 201, 1251, 414], axis: [117, 205, 559, 1318],
  yl: [[322, '2'], [440, '0', 1]], ym: [264, 382, 499],
  xl: [[236, '-8'], [369, '-7'], [503, '-6'], [635, '-5'], [769, '-4'], [902, '-3'], [1036, '-2'], [1169, '-1'], [1303, '0', 1]],
  lines: [['#3f8fb8', 12, '575,296 600,303 635,314'],
    [K.green, 5, '200,283 190,290 194,300 192,330 184,348 178,365 175,372 180,388 425,283 560,273 577,272 570,295 600,300 612,318 640,325 668,330 638,349 700,350 735,365 745,375 765,387 825,389 826,403 835,404 836,414 1049,414 1049,404 1243,403'],
    [K.blue, 5, '455,272 470,288 490,296 522,296 520,308 505,311 540,314 535,296 550,303 560,292 540,322 575,330 605,338 577,345 565,360 590,362 600,395 640,526 700,497 724,496 690,492 708,488 703,476 680,470 660,460 638,455 650,435 658,425 640,418 635,405 665,400 640,392 610,382 590,350 577,334']],
  stars: [[200, 283], [244, 270], [577, 272], [577, 334], [610, 382], [1243, 403]],
  legends: [{ box: [102, 207, 699, 272], color: K.blue, from: 115, to: 687, parts: [W(1, '[0,0]=-5.598', K.mauve), [', ', K.khaki], W(1, '[1,0]=2.498', K.khaki)] },
    { box: [714, 207, 1311, 272], color: '#abd16f', from: 725, to: 1298, parts: [W(1, '[0,1]=-8.161', K.brown), [', ', K.brown], W(1, '[1,1]=3.435', K.gold)] }]
});
chart('w1-col0', {
  box: [66, 633, 1251, 414], axis: [101, 636, 991, 1318], t: [167, 1254], guides: [167, 530, 892], end: [1252.5, 700, '#4a4af5', 5],
  yl: [[778, '0', 1]], ym: [650, 694, 737, 822, 866, 910, 953], notes: [[177, 678, '0'], n299(1240, 987)],
  lines: [[K.khaki, 5, '167,675 170,716 192,716 200,704 235,705 250,715 285,716 330,725 370,733 400,737 450,741 527,741 532,800 540,802 580,798 670,787 710,775 790,764 880,762 960,749 1015,739 1030,743 1080,739 1110,736 1170,735 1200,725 1210,730 1240,724 1253,726'],
    [K.grey, 5, '167,675 172,748 192,744 202,773 215,769 222,788 290,784 322,780 332,795 370,791 390,787 440,785 527,778 531,820 535,826 542,815 565,810 590,816 610,812 660,818 720,818 760,813 880,819 960,825 1040,820 1100,824 1140,828 1170,832 1200,837 1215,833 1253,836'],
    [K.mauve, 5, '167,951 190,941 200,940 230,923 265,923 290,915 340,912 350,906 380,910 400,904 450,898 527,895 540,878 560,873 570,878 620,877 680,888 750,887 800,884 840,885 890,890 940,898 1050,891 1150,900 1200,903 1253,900']],
  legends: [{ box: [486, 636, 1314, 702], color: K.blue, from: 498, to: 1301, parts: [W(1, '[0,0]=-5.598', K.mauve), comma, W(1, '[1,0]=2.498', K.khaki), comma, ['b₁[0]=-2.690', K.grey]] }]
});
chart('w1-col1', {
  box: [66, 45, 1251, 414], axis: [143, 48, 404, 1318], t: [208, 1254], guides: [208, 558], end: [1252.5, 114],
  yl: [[83, '10'], [236, '0', 1]], ym: [53, 113, 143, 175, 205, 265, 295, 325, 355, 385], notes: [[218, 90, '0'], n299(1240, 399)],
  lines: [[K.grey, 5, '208,100 212,88 218,92 226,103 235,108 242,106 250,118 268,126 290,126 330,135 380,137 388,144 418,141 430,149 450,147 470,151 555,152 562,170 568,198 620,199 650,203 740,204 800,209 920,211 1040,211 1070,216 1180,216 1253,220'],
    [K.gold, 5, '208,225 240,225 250,228 270,227 290,221 320,221 350,213 390,211 400,207 440,200 490,193 557,189 568,219 600,215 700,205 800,197 920,193 1050,185 1253,182'],
    [K.brown, 5, '208,240 218,247 232,262 242,263 248,276 268,288 290,289 330,297 350,300 378,302 386,308 418,306 425,314 450,312 470,317 557,317 568,362 620,362 700,360 850,361 920,358 1253,357']],
  over: line(907.5, 114, 907.5, 403, '#00ff00', 7),
  legends: [{ box: [501, 48, 1314, 114], color: '#abd16f', from: 513, to: 1302, parts: [W(1, '[0,1]=-8.161', K.brown), comma, W(1, '[1,1]=3.435', K.gold), comma, ['b₁[1]=0.946', K.grey]] }]
});

const v = (s) => `<tspan font-family="Liberation Serif, serif" font-weight="700" font-style="italic">${s}</tspan>`;
const hatch = (id, d, c, n) => `<pattern id="${id}" width="${n}" height="${n}" patternUnits="userSpaceOnUse"><path d="${d === '/' ? `M0 ${n}L${n} 0` : d === '\\' ? `M0 0L${n} ${n}` : d === '|' ? `M2 0V${n}` : `M0 2H${n}`}" stroke="${c}" stroke-width="2.500" fill="none"/></pattern>`;
const shape = (pts, f, more = '') => `<polygon points="${pts}" fill="${f}" ${more}/>`;
const big = (x, y, s, f) => text(x, y + 15, s, { size: 42, bold: 1, fill: f, a: 'middle' });

chart('w1-plane', {
  box: [15, 249, 1362, 798], axis: [86, 252, 991, 1377],
  yl: [[302, '4'], [399, '2'], [496, '0', 1], [593, '-2'], [690, '-4'], [788, '-6'], [886, '-8']], ym: [985],
  xl: [[142, '-14'], [239, '-12'], [337, '-10'], [434, '-8'], [532, '-6'], [629, '-4'], [726, '-2'], [823, '0', 1], [921, '2'], [1018, '4'], [1116, '6'], [1213, '8'], [1311, '10']],
  under: `<defs>${hatch('g1', '/', '#a8cc70', 24)}${hatch('g2', '\\', '#a8cc70', 24)}${hatch('b1', '|', '#57bdf0', 24)}${hatch('b2', '-', '#57bdf0', 24)}</defs>` +
    shape('702,374 854,374 743,620 702,620', '#90cbec') + shape('854,374 946,374 946,620 743,620', '#a8dff8') +
    shape('702,374 854,374 743,620 702,620', 'url(#b1)') + shape('854,374 946,374 946,620 743,620', 'url(#b2)') +
    rect(702, 374, 244, 246, 'none', K.blue, 4) +
    shape('750,326 903,326 801,571 750,571', 'rgba(170,215,120,.5)') + shape('903,326 996,326 996,571 801,571', 'rgba(210,250,140,.6)') +
    shape('750,326 903,326 801,571 750,571', 'url(#g1)') + shape('903,326 996,326 996,571 801,571', 'url(#g2)') +
    rect(750, 326, 246, 245, 'none', '#abd16f', 4) +
    line(824.5, 252, 824.5, 991, '#999', 4) + line(88, 497, 1377, 497, '#999', 3) + rect(824, 448, 51, 49, 'rgba(130,160,130,.35)', '#80a090', 3),
  over: line(817, 283, 640, 535, '#808080', 4) + line(560, 649, 420, 849, '#808080', 4) + line(817, 285, 420, 849, '#808080', 5, 'stroke-dasharray="6 5"') + line(812, 283, 450, 800, '#808080', 4, 'stroke-dasharray="6 5"') +
    line(580, 991, 912, 252, K.blue, 5) + line(626, 991, 934, 252, '#abd173', 5) + line(692, 830, 772, 638, '#8aad5a', 6) +
    big(834, 298, '0', '#3bb05a') + big(712, 467, '1', '#ff6b81') + big(554, 700, '1', '#e03bd0') + big(439, 865, '0', '#3ba0dc') +
    rect(916, 264, 388, 58, 'rgba(255,255,255,.4)') + text(904, 306, `-5.60•${v('x')}+2.50•${v('y')}-2.69=0`, { size: 37, fill: '#0000ff', len: 398 }) +
    rect(750, 648, 483, 82, 'rgba(252,252,252,.88)', '#c5dd9b', 3, 'rx="3"') + text(764, 704, `-8.16•${v('x')}+3.44•${v('y')}+0.95=0`, { size: 42, fill: '#0000ff', len: 456 })
});
chart('w2-plane', {
  box: [15, 63, 1362, 825], axis: [80, 67, 832, 1377],
  yl: [[193, '4'], [375, '2'], [557, '0', 1], [739, '-2']], ym: [103, 284, 467, 649, 828],
  xl: [[183, '-6'], [365, '-4'], [547, '-2'], [730, '0', 1], [910, '2'], [1093, '4'], [1272, '6']],
  under: `<defs>${hatch('p1', '/', '#e5a5b5', 21)}${hatch('p2', '\\', '#e8a0b4', 18)}<pattern id="dots" width="9" height="9" patternUnits="userSpaceOnUse"><rect width="3" height="3" fill="#e8e0e0"/></pattern></defs>` +
    shape('501,328 718,328 611,785 501,785', '#ecc1cb') + shape('718,328 957,328 957,785 611,785', '#fadbe1') +
    shape('501,328 718,328 611,785 501,785', 'url(#p1)') + shape('718,328 957,328 957,785 611,785', 'url(#p2)') + rect(501, 329, 456, 456, 'none', '#e8a9b8', 4) +
    line(730, 67, 730, 832, '#b0b0b0', 5) + line(82, 557, 1377, 557, '#a8a8a8', 4) + rect(730, 466, 91, 91, '#cdb2b4', '#8a8f98', 3) + rect(732, 469, 87, 86, 'url(#dots)'),
  over: `<path d="M727 160L702 470L655 625M724 165L690 500L680 590L655 625" fill="none" stroke="#808080" stroke-width="4.500" stroke-dasharray="9 5"/>` +
    line(600, 832, 780, 67, '#ecaab8', 6) +
    big(747, 171, '0', '#3bb05a') + big(714, 490, '1', '#ff6b81') + big(692, 606, '1', '#e03bd0') + big(668, 636, '0', '#3ba0dc') +
    rect(620, 768, 406, 52, 'rgba(250,250,250,.6)') + text(620, 810, `11.46•${v('x')}-2.73•${v('y')}+8.21=0`, { size: 37, fill: '#0000ff', len: 403 })
});
chart('w2-pairs', {
  box: [96, 42, 1308, 414], axis: [164, 45, 401, 1404],
  yl: [[130, '-2'], [199, '-3'], [268, '-4'], [337, '-5']], ym: [61],
  xl: [[355, '11'], [608, '12'], [862, '13'], [1117, '14', 1], [1372, '15']],
  lines: [['#e0a6c6', 5, '272,175 355,262 538,190 555,168 565,158 585,152 590,135 600,130 628,136 624,106 662,135 695,115 690,103 700,97 718,100 725,92 742,93 785,138 791,88 805,104 809,76 835,113 875,115 893,145 936,249 979,187 1032,367 1327,220'],
    ['#e0a6c6', 6, '220,168 245,158 262,170 240,150 297,146 268,156 300,152 262,178 310,172 325,165 275,162 345,163 395,160 365,168 392,172 350,184 400,178 432,176 485,170 450,184 410,190']],
  over: shape('386,182 420,181 423,174 462,181 425,194 388,195', '#b8849f', 'stroke="#a07590" stroke-width="2"') +
    `<path d="M527 179L549 201M549 179L527 201" stroke="#0a5a0a" stroke-width="11"/><path d="M528 180L548 200M548 180L528 200" stroke="#10e810" stroke-width="7"/>`,
  stars: [[325, 163], [1327, 220]],
  legends: [{ box: [840, 48, 1398, 114], color: '#dfa4c5', from: 852, to: 1384, parts: [W(2, '[0]=11.456', K.vio), [', ', K.vio], W(2, '[1]=-2.731', K.rose)] }]
});
chart('w2-singles', {
  box: [96, 474, 1308, 414], axis: [176, 477, 832, 1404], t: [242, 1342], guides: [242, 609, 976], end: [1338.5, 542, '#5a5aff', 6],
  yl: [[580, '10'], [718, '0', 1]], ym: [499, 526, 553, 607, 635, 663, 690, 745, 772, 799, 826], notes: [[252, 519, '0'], [622, 519, '100'], n299(1327, 828)],
  lines: [['#d2a0dc', 5, '242,505 244,530 270,534 300,543 350,547 450,554 540,556 607,558 620,574 700,575 760,570 900,573 980,570 1050,565 1120,569 1200,567 1280,562 1340,563'],
    [K.grey, 5, '242,632 262,628 275,629 300,622 400,619 425,614 440,619 500,613 607,611 622,598 650,601 690,599 710,602 830,605 860,601 930,601 980,604 1040,609 1140,602 1240,606 1280,609 1340,606'],
    [K.rose, 8, '240,760 246,790 255,782 263,758 278,765 290,745 305,737 320,738 326,746 350,738 375,740 400,742 420,749 430,741 470,746 540,752 604,756 612,770 620,749 680,750 780,747 850,752 1000,751 1100,754 1160,757 1240,752 1340,756']],
  legends: [{ box: [654, 477, 1401, 543], color: '#dfa4c5', from: 667, to: 1389, parts: [W(2, '[0]=11.456', K.vio), comma, W(2, '[1]=-2.731', K.rose), comma, ['b₂=8.206', K.grey]] }]
});
const hi = (x, s, bg) => rect(x, 42, 94, 50, bg) + text(x + 2, 84, s, { size: 37, bold: 1, fill: '#0000c8', len: 90 });
chart('loss', {
  box: [96, 36, 1308, 465], axis: [150, 39, 445, 1404], t: [217, 1342], guides: [217, 591, 967], end: [1338.5, 95, '#4a4af5', 5],
  yl: [[202, '10'], [404, '0', 1]], ym: [43, 82, 122, 162, 242, 283, 323, 362], notes: [[229, 85, '0'], n299(1323, 437)],
  lines: [['#b8a818', 5, '217,240 221,322 235,322 246,300 253,325 265,348 274,352 281,370 289,362 296,369 304,352 312,361 325,364 340,379 400,376 408,390 440,384 455,397 480,396 588,398 597,293 604,380 625,379 640,383 680,380 780,388 908,382 920,387 1040,392 1135,387 1250,394 1340,395'],
    ['#ff6b7d', 6, '217,80 221,402 230,402 236,393 243,275 250,402 260,402 265,388 273,400 400,402 588,402 596,118 602,400 655,397 720,401 1340,402'],
    ['#3aa3dc', 8, '213,80 250,80 265,206 273,208 281,275 287,240 295,270 303,204 311,240 320,243 330,285 340,310 350,308 356,324 364,305 371,321 380,308 402,300 408,366 420,345 437,332 447,375 455,384 467,373 475,382 487,379 497,393 540,397 588,398 596,385 604,330 625,315 634,332 650,325 687,320 697,333 708,330 716,342 730,340 752,353 800,337 812,349 850,343 875,327 908,324 917,338 957,345 965,352 995,352 1005,362 1024,357 1038,374 1050,368 1070,369 1090,356 1135,346 1160,352 1173,350 1185,362 1230,363 1240,377 1255,370 1264,383 1292,387 1305,376 1320,379 1330,376 1340,380']],
  over: rect(610.5, 40.5, 789, 54, '#fff', '#ffe600') + text(620, 84, 'Cost(loss):=', { size: 37, bold: 1, fill: '#b8a818', len: 188 }) + hi(809, '0.314', '#dcff99') +
    text(909, 84, ',') + text(947, 84, '0^0=', { size: 37, bold: 1, fill: '#ff6b81', len: 90 }) + hi(1038, '0.076', '#aaff99') +
    text(1138, 84, ',') + text(1186, 84, '1^0=', { size: 37, bold: 1, fill: '#3ba0dc', len: 94 }) + hi(1282, '1.091', '#ff9999')
});
chart('z1', {
  box: [99, 684, 1746, 408], axis: [182, 687, 1042, 1845], t: [259, 1774], guides: [259, 764, 1269], end: [1768.5, 741],
  yl: [[715, '10'], [868, '0', 1]], ym: [745, 776, 807, 838, 900, 931, 962, 993, 1024],
  notes: [[270, 729, '0'], [776, 729, '100'], [1257, 729, '200', 'end'], n299(1756, 1038)],
  lines: [[K.blue, 5, '259,912 264,972 275,968 295,959 306,983 313,975 325,972 333,983 345,978 375,981 405,976 425,968 470,967 487,975 505,975 516,966 555,970 573,961 640,960 700,955 757,952 770,982 778,964 807,958 825,964 890,961 910,967 940,966 980,974 1010,971 1060,974 1120,968 1195,966 1215,973 1250,974 1270,980 1350,982 1370,987 1400,984 1500,980 1600,982 1640,990 1690,997 1708,1000 1720,994 1774,998'],
    [K.green, 5, '259,740 265,727 275,742 285,763 295,771 305,767 315,795 345,814 385,817 410,824 425,832 465,833 485,841 508,841 516,856 530,851 555,849 573,863 600,859 625,862 638,870 700,870 760,868 768,900 778,962 830,966 980,967 1100,970 1350,974 1550,977 1774,983']],
  legends: [{ box: [1362, 687, 1842, 741], color: K.blue, from: 1374, to: 1829, parts: [['Z1[0]=-8.288', K.blue], comma, ['Z1[1]=-7.215', '#abd16f']] }]
});
chart('a1', {
  box: [546, 684, 1746, 408], axis: [599, 687, 1042, 2292], t: [676, 2220], guides: [676, 1191, 1705], end: [2215.5, 741, '#0000ee'],
  yl: [[711, '10'], [979, '0', 1]], ym: [757, 812, 868, 925, 1033], notes: [[1692, 729, '200', 'end', '#6f69b8'], n299(2203, 1038, '#c9c5c5')],
  lines: [['#a9dbf7', 5, '676,985 682,996 715,994 725,998 790,997 900,996 1000,995 1190,993 1280,996 2100,1001 2220,1002'],
    ['#d2e4b4', 5, '676,730 710,800 732,845 745,858 763,882 780,880 795,882 805,890 820,893 845,910 860,913 885,916 905,927 930,926 940,952 955,943 980,941 1000,968 1020,962 1050,968 1062,977 1100,977 1190,978 1205,994 1320,996 1600,996 2220,1000']],
  legends: [{ box: [1803, 687, 2289, 741], color: '#a9dbf7', bg: '#968b8a', from: 1815, to: 2276, parts: [['A1[0]=-0.829', '#a9dbf7'], comma, ['A1[1]=-0.721', '#d2e4b4']] }]
});
chart('z2', {
  box: [1020, 684, 1746, 408], axis: [1094, 687, 1042, 2766], t: [1171, 2695], guides: [1171, 1679, 2187], end: [2689.5, 741],
  yl: [[748, '0', 1], [842, '-20'], [936, '-40']], ym: [699, 795, 889, 1033],
  notes: [[1182, 729, '0'], [1692, 729, '100'], [2175, 729, '200', 'end'], n299(2677, 1038)],
  lines: [[K.pink, 5, '1171,870 1176,1000 1186,940 1196,865 1206,840 1216,880 1226,805 1236,795 1248,793 1258,777 1268,785 1278,778 1288,795 1298,787 1310,785 1325,772 1345,769 1360,765 1370,769 1380,766 1395,770 1420,771 1430,755 1450,760 1475,763 1490,749 1530,750 1560,743 1640,741 1680,742 1690,735 1700,731 1800,729 1900,735 2000,733 2110,730 2200,736 2260,738 2290,742 2400,735 2550,739 2600,745 2689,742']],
  over: line(1020, 685.5, 2766, 685.5, K.pink),
  legends: [{ box: [2580, 687, 2763, 741], color: K.pink, from: 2592, to: 2750, parts: [['Z2=0.682', K.pink]] }]
});

// Network diagram
(() => {
  const el = document.getElementById('network');
  el.setAttribute('viewBox', '12 477 2625 444');
  const D = 'style="font-family:DejaVu Sans,sans-serif"';
  const t = (x, y, s, o) => text(x, y + 12, s, { a: 'middle', size: 32, more: D, ...o });
  const edge = (a, b, c) => {
    let s = line(...a, c, 6) + line(...b, c, 6);
    const [x1, y1, x2, y2] = b, an = Math.atan2(y2 - y1, x2 - x1);
    [-.5, .5].forEach(d => s += line(x2, y2, x2 - 28 * Math.cos(an + d), y2 - 28 * Math.sin(an + d), c, 6));
    return s;
  };
  const beige = '#e3dccf';
  let s = edge([457, 518, 535, 530], [667, 548, 900, 582], beige) + edge([457, 880, 540, 867], [661, 851, 898, 818], beige) +
    edge([170, 587, 347, 587], [480, 587, 900, 587], '#a897b0') + edge([170, 600, 347, 648], [478, 685, 900, 800], '#c9966c') +
    edge([170, 800, 352, 749], [473, 716, 900, 598], '#aaa287') + edge([170, 810, 352, 810], [473, 810, 900, 810], '#dcb04e') +
    edge([984, 587, 1055, 587], [1260, 587, 1332, 587], '#808080') + edge([984, 810, 1055, 810], [1260, 810, 1332, 810], '#808080') +
    edge([1417, 595, 1528, 614], [1669, 639, 1972, 692], '#d6a3da') + edge([1417, 803, 1533, 783], [1665, 760, 1975, 706], '#eba6b6') +
    edge([1757, 848, 1782, 835], [1870, 780, 1980, 718], beige) + edge([2056, 698, 2190, 698], [2344, 698, 2478, 698], '#808080');
  [[600, 538, '-2.690'], [411, 586, '-5.598'], [411, 664, '-8.161'], [411, 730, '2.498'], [411, 808, '3.435'], [600, 856, '0.946'], [1595, 625, '11.456'], [1597, 769, '-2.731'], [1825, 805, '8.206']].forEach(n => s += t(...n));
  [[1157, 586, 'LeakyReLU'], [1157, 808, 'LeakyReLU'], [2266, 697, 'sigmoid']].forEach(([x, y, n]) => s += t(x, y, n, { fill: '#808080' }));
  [[128, 587, 41, '#dc5555', 'x₀', '1.000'], [128, 810, 41, '#ff8822', 'x₁', '0.000'], [941, 587, 41, '#57bdf0', 'z₀', '-8.288'], [941, 810, 41, '#abd173', 'z₁', '-7.215'],
    [1375, 587, 41, '#a9dcf9', 'a₀', '-0.829'], [1375, 810, 41, '#d5e8b8', 'a₁', '-0.721'], [2014, 698, 41, '#ff5fae', 'z₂', '0.682'], [2520, 698, 41, '#ffb0d8', 'ŷ', '0.664'],
    [419, 512, 36, '#e0dacf', '+1'], [419, 884, 36, '#e0dacf', '+1'], [1723, 866, 36, '#e0dacf', '+1']].forEach(([x, y, r, f, n, val]) => {
    s += `<circle cx="${x}" cy="${y}" r="${r}" fill="${f}" stroke="#c0c0c0" stroke-width="4"/>`;
    s += t(x, y, n, { fill: val ? '#d01020' : '#222' });
    if (val) s += line(x + 1.5, y - 63, x + 1.5, y - 25, '#e02030', 3) + t(x, y - 92, val, { size: 36, fill: '#d00010' });
  });
  el.innerHTML = s;
})();

// Mouse pointers
document.getElementById('pointers').innerHTML =
  [[743, 39], [1126, 242], [417, 400], [743, 417], [1106, 558], [1512, 413], [1641, 128], [1491, 135], [327, 681], [882, 779], [866, 824], [1338, 790]]
    .map(([x, y]) => `<use href="#arrow" x="${x - 1}" y="${y - 1}" width="14" height="22"/>`).join('') +
  [[555, 791], [603, 825], [1615, 152]].map(([x, y]) => `<use href="#hand" x="${x}" y="${y}" width="20" height="24"/>`).join('') +
  '<use href="#split" x="431" y="241" width="22" height="19"/><use href="#split" width="22" height="19" transform="translate(357.500 636) rotate(90)"/>';
```
